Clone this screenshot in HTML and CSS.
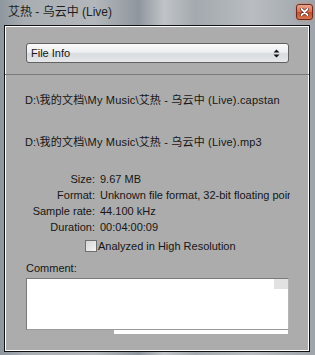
FILE: index.html
```html
<!DOCTYPE html>
<html>
<head>
  <meta charset="utf-8">
  <title>艾热 - 乌云中 (Live)</title>
  <link rel="stylesheet" href="styles.css">
</head>
<body>
  <div class="window">
    <div class="titlebar">
      <span class="title">艾热 - 乌云中 (Live)</span>
      <button class="close">
        <svg width="9" height="8" viewBox="0 0 9 8">
          <path d="M1.5 1 L7.5 7 M7.5 1 L1.5 7" stroke="#5a1e12" stroke-width="3.2" stroke-linecap="round"/>
          <path d="M1.5 1 L7.5 7 M7.5 1 L1.5 7" stroke="#fff" stroke-width="1.8" stroke-linecap="round"/>
        </svg>
      </button>
    </div>
    <div class="panel">
      <div class="top">
        <div class="select">
          <span>File Info</span>
          <svg class="arrows" width="7" height="9" viewBox="0 0 7 9">
            <path d="M3.5 0.5 L6.5 3.5 L0.5 3.5 Z M3.5 8.5 L6.5 5.5 L0.5 5.5 Z" fill="#111"/>
          </svg>
        </div>
      </div>
      <div class="info">
        <p class="path">D:\我的文档\My Music\艾热 - 乌云中 (Live).capstan</p>
        <p class="path second">D:\我的文档\My Music\艾热 - 乌云中 (Live).mp3</p>
        <div class="props">
          <span class="key">Size:</span><span class="val">9.67 MB</span>
          <span class="key">Format:</span><span class="val">Unknown file format, 32-bit floating point</span>
          <span class="key">Sample rate:</span><span class="val">44.100 kHz</span>
          <span class="key">Duration:</span><span class="val">00:04:00:09</span>
        </div>
        <label class="check"><span class="box"></span>Analyzed in High Resolution</label>
        <div class="comment-label">Comment:</div>
        <div class="comment"><span class="scroll"></span></div>
        <div class="comment-tail"></div>
      </div>
    </div>
  </div>
</body>
</html>
```

FILE: styles.css
```css
body {
  margin: 0;
  font-family: 'Liberation Sans', 'Noto Sans CJK SC', sans-serif;
  font-size: 11px;
  color: #161616;
}
.window {
  width: 315px;
  height: 355px;
  box-sizing: border-box;
  padding: 0 5px 3px 4px;
  display: flex;
  flex-direction: column;
  background: linear-gradient(90deg, #8e969e 0%, #a9aeb3 8%, #b3b7bb 30%, #8f969d 44%, #c0c4c8 52%, #a3a9ae 62%, #b9bdc1 80%, #9ea4aa 100%);
}
.titlebar {
  height: 25px;
  display: flex;
  align-items: center;
  justify-content: space-between;
  padding: 0 0 0 4px;
}
.title {
  font-size: 12px;
  color: #1e1e1e;
  margin-top: -4px;
}
.close {
  width: 17px;
  height: 16px;
  margin: -2px -3px 0 0;
  padding: 0;
  border: 1px solid #6a2a1d;
  border-radius: 3px;
  background: linear-gradient(#eba48c 0%, #db7658 45%, #c54e2e 55%, #d8754f 100%);
  box-shadow: 0 0 3px rgba(230, 120, 80, 0.7);
  display: flex;
  align-items: center;
  justify-content: center;
}
.panel {
  flex: 1;
  background: #acacac;
  border: 1px solid #111;
  box-shadow: inset 1px 1px 0 #fff, inset -1px -1px 0 #fff;
  display: flex;
  flex-direction: column;
}
.top {
  height: 49px;
  box-sizing: border-box;
  padding: 17px 20px 0 21px;
  border-bottom: 1px solid #7b7b7b;
}
.select {
  height: 20px;
  box-sizing: border-box;
  border: 1px solid #616161;
  border-radius: 3px;
  background: linear-gradient(#fbfbfb 0%, #eceef0 45%, #d8dbdf 55%, #e6e8ea 100%);
  display: flex;
  align-items: center;
  justify-content: space-between;
  padding: 0 8px 0 4px;
  font-size: 11px;
}
.info {
  padding: 18px 0 0 20px;
}
.path {
  margin: 0;
  line-height: 14px;
  letter-spacing: 0.18px;
  white-space: nowrap;
}
.path.second {
  margin-top: 28px;
}
.props {
  margin-top: 22px;
  display: grid;
  grid-template-columns: 70px 190px;
  column-gap: 5px;
  line-height: 16px;
}
.key {
  text-align: right;
}
.val {
  white-space: nowrap;
  overflow: hidden;
}
.check {
  margin: 3px 0 0 60px;
  display: flex;
  align-items: center;
  gap: 1px;
  line-height: 16px;
}
.box {
  width: 10px;
  height: 10px;
  border: 1px solid #6f6f6f;
  background: linear-gradient(135deg, #d5d5d5, #f4f4f4);
}
.comment-label {
  margin-top: 7px;
  margin-left: 1px;
  line-height: 14px;
}
.comment {
  margin: 3px 0 0 1px;
  width: 263px;
  height: 52px;
  box-sizing: border-box;
  background: #fff;
  border: 1px solid #7a7a7a;
  border-bottom-color: #9a9a9a;
  border-right-color: #b5b5b5;
  display: flex;
  justify-content: flex-end;
}
.scroll {
  width: 14px;
  height: 10px;
  background: #e2e2e2;
}
.comment-tail {
  margin-left: 89px;
  width: 174px;
  height: 4px;
  background: #fff;
}
```
